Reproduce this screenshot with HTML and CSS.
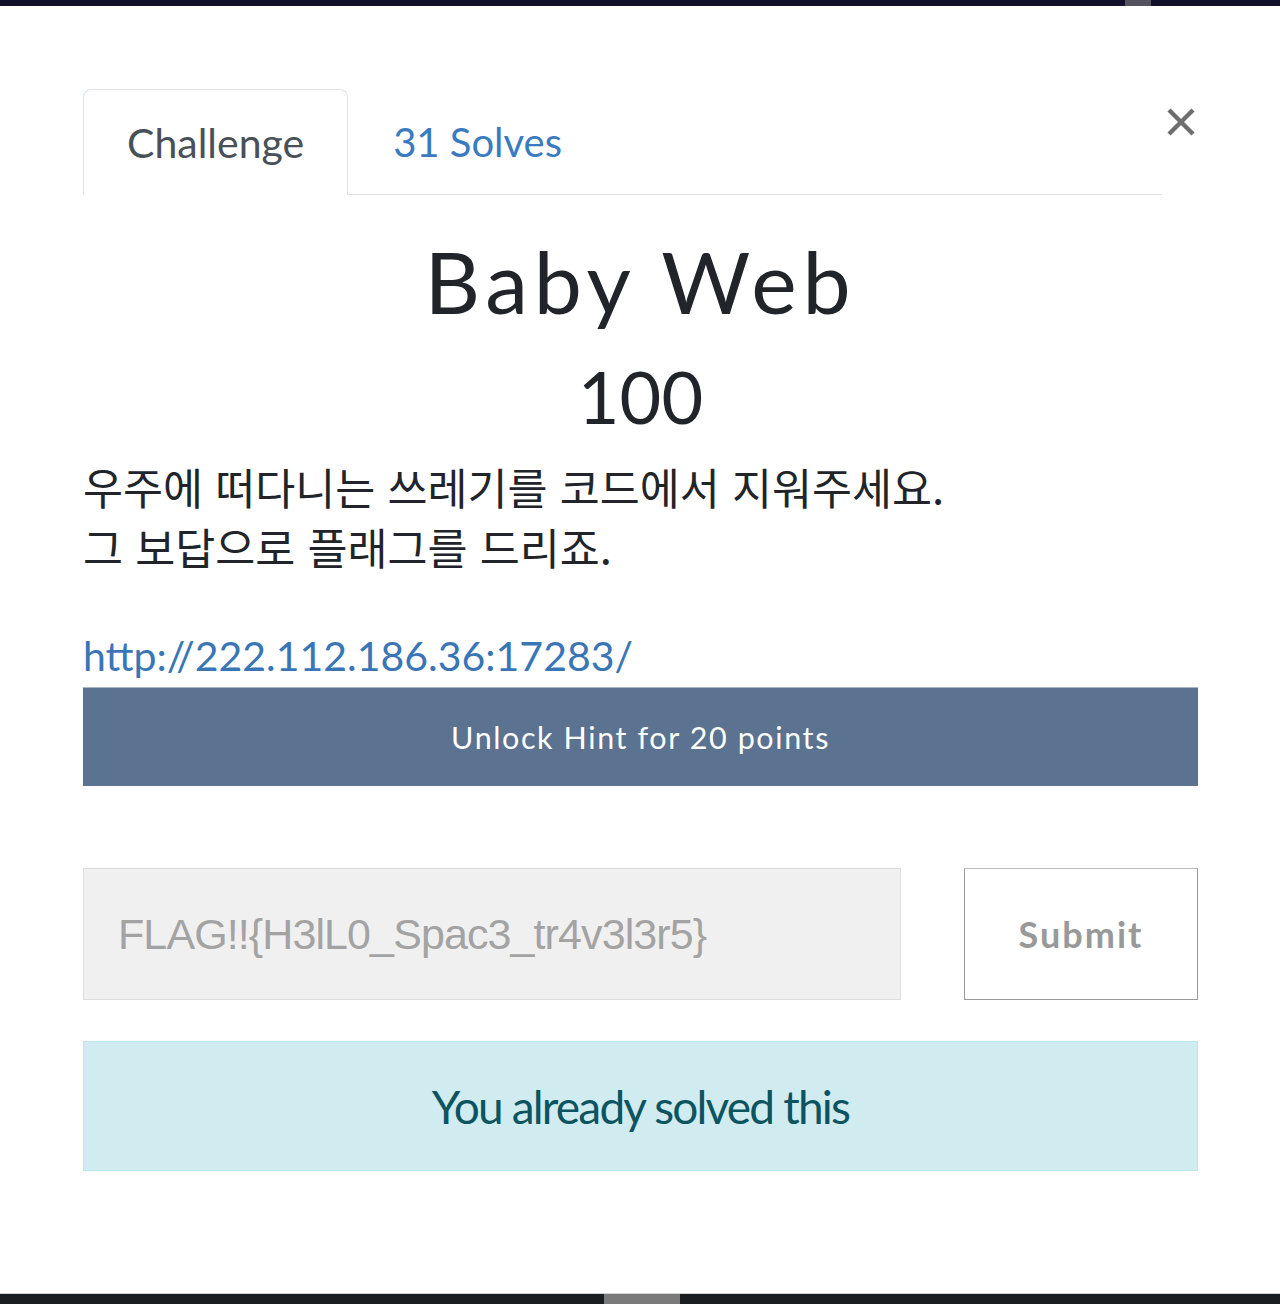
FILE: index.html
```html
<!DOCTYPE html>
<html lang="ko">
<head>
<meta charset="utf-8">
<title>Baby Web</title>
<link rel="stylesheet" href="styles.css">
</head>
<body>
<div class="topbar"><span class="topbar-thumb"></span></div>
<main class="modal">
  <div class="modal-head">
    <ul class="tabs">
      <li class="tab active">Challenge</li>
      <li class="tab link">31 Solves</li>
    </ul>
    <button class="close" aria-label="Close">
      <svg width="30" height="30" viewBox="0 0 30 30"><path d="M3 3L27 27M27 3L3 27" stroke="#6e6e6e" stroke-width="4.4" stroke-linecap="butt"/></svg>
    </button>
  </div>
  <h2 class="title">Baby Web</h2>
  <h3 class="value">100</h3>
  <div class="desc">
    <p>우주에 떠다니는 쓰레기를 코드에서 지워주세요.<br>그 보답으로 플래그를 드리죠.</p>
    <p class="url"><a href="#">http://222.112.186.36:17283/</a></p>
  </div>
  <button class="hint">Unlock Hint for 20 points</button>
  <div class="submit-row">
    <div class="flag-input">FLAG!!{H3lL0_Spac3_tr4v3l3r5}</div>
    <button class="submit">Submit</button>
  </div>
  <div class="alert">You already solved this</div>
</main>
<div class="bottombar"><span class="bottombar-thumb"></span></div>
</body>
</html>
```
FILE: styles.css
```css
* { box-sizing: border-box; }
html, body { margin: 0; padding: 0; }
body {
  width: 1280px;
  height: 1304px;
  background: #fff;
  font-family: Lato, "Noto Sans", sans-serif;
  display: flex;
  flex-direction: column;
  overflow: hidden;
}
.topbar {
  height: 6px;
  background: #12102a;
  display: flex;
  flex-shrink: 0;
}
.topbar-thumb {
  margin-left: 1125px;
  width: 26px;
  background: #54525f;
}
.modal {
  flex: 1;
  padding: 83px 82px 0 83px;
  display: flex;
  flex-direction: column;
}
.modal-head {
  display: flex;
  align-items: flex-start;
}
.tabs {
  list-style: none;
  margin: 0;
  padding: 0;
  width: 1079px;
  display: flex;
  border-bottom: 1px solid #dee2e6;
}
.tab {
  height: 106px;
  padding: 0 43px;
  display: flex;
  align-items: center;
  font-size: 41px;
  border: 1px solid transparent;
  border-radius: 8px 8px 0 0;
  margin-bottom: -1px;
}
.tab.active {
  color: #495057;
  border-color: #dee2e6 #dee2e6 #fff;
  background: #fff;
}
.tab.link {
  color: #3a7bbf;
  padding-left: 44px;
  font-size: 40px;
}
.close {
  margin: 18px 0 0 4px;
  padding: 0;
  border: 0;
  background: none;
  width: 30px;
  height: 30px;
  display: flex;
}
.title {
  margin: 33px 0 0;
  text-align: center;
  font-weight: 400;
  font-size: 86px;
  letter-spacing: 5.8px;
  line-height: 106px;
  color: #212529;
}
.value {
  margin: 17px 0 0;
  text-align: center;
  font-weight: 400;
  font-size: 72px;
  line-height: 90px;
  color: #212529;
}
.desc p {
  margin: 0;
}
.desc p:first-child {
  font-family: "Noto Sans CJK KR", sans-serif;
  font-size: 43.5px;
  line-height: 60px;
  color: #212529;
  margin-top: 16px;
}
.url {
  margin-top: 54px !important;
  font-size: 41px;
  line-height: 50px;
}
.url a {
  color: #3a76b5;
  text-decoration: none;
}
.hint {
  margin-top: 6px;
  height: 99px;
  width: 100%;
  border: 0;
  border-top: 1px solid #aab4c2;
  background: #5b7290;
  color: #fff;
  font-family: Lato, sans-serif;
  font-size: 30.5px;
  letter-spacing: 1.6px;
}
.submit-row {
  margin-top: 82px;
  display: flex;
  justify-content: space-between;
}
.flag-input {
  width: 818px;
  height: 132px;
  background: #f0f0f0;
  border: 1px solid #dcdcdc;
  display: flex;
  align-items: center;
  padding-left: 34px;
  font-family: "Liberation Sans", Arial, sans-serif;
  font-size: 43px;
  letter-spacing: -0.9px;
  color: #a3a3a3;
}
.submit {
  width: 234px;
  height: 132px;
  background: #fff;
  border: 1px solid #9a9a9a;
  border-top-color: #bdbdbd;
  color: #999;
  font-family: Lato, sans-serif;
  font-weight: 700;
  font-size: 36px;
  letter-spacing: 2px;
  padding: 0;
}
.alert {
  margin-top: 41px;
  height: 130px;
  background: #d1ecf1;
  border: 1px solid #bee5eb;
  color: #0c5460;
  display: flex;
  align-items: center;
  justify-content: center;
  font-size: 46px;
  letter-spacing: -1.8px;
}
.bottombar {
  height: 11px;
  background: #1b1e21;
  border-top: 1px solid #d0d0d0;
  display: flex;
  flex-shrink: 0;
}
.bottombar-thumb {
  margin-left: 604px;
  width: 76px;
  background: #7a7a7a;
}
```
